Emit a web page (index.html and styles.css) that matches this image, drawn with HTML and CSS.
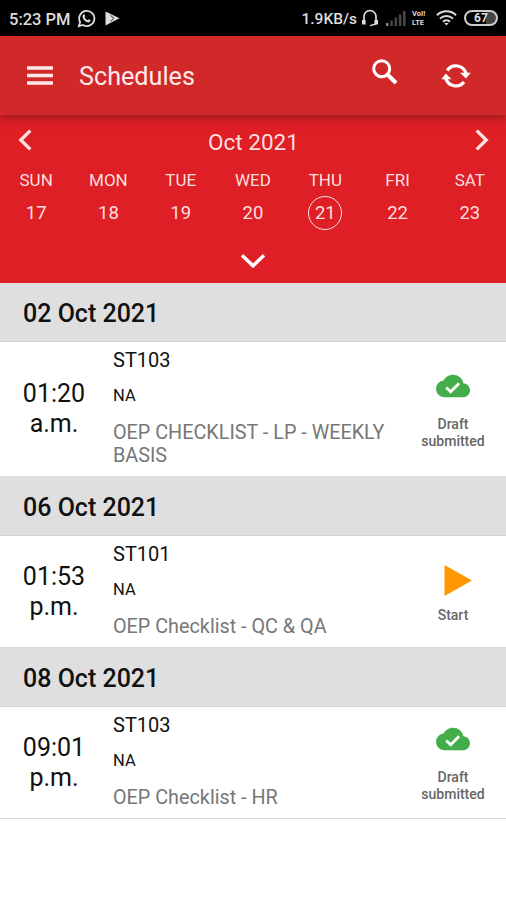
FILE: index.html
```
<!DOCTYPE html>
<html lang="en">
<head>
  <meta charset="UTF-8">
  <title>Schedules</title>
  <link rel="stylesheet" href="styles.css">
</head>
<body>

  <div class="status-bar">
    <div class="status-left">
      <span class="clock">5:23 PM</span>
      <svg class="whatsapp" width="19" height="19" viewBox="0 0 20 20">
        <path d="M2 18 L3.3 13.8 A8 8 0 1 1 6.2 16.8 Z" fill="none" stroke="#ddd" stroke-width="1.9"/>
        <path d="M6.3 6.2 C7 5.2 7.9 5.2 8.3 6.2 L8.8 7.5 L8 8.7 C8.8 10.2 9.8 11.1 11.3 11.8 L12.4 10.8 L14.2 11.7 C14.6 12.9 13.4 14.2 12 14.1 C9 13.8 5.8 10.5 5.8 7.8 Z" fill="#ddd"/>
      </svg>
      <svg class="play-store" width="15" height="15" viewBox="0 0 15 15">
        <path d="M0.5 0.5 L14.5 7.3 L0.5 14.5 Z" fill="#ddd"/>
        <path d="M5.5 4.5 L9 7.3 L5.5 10.5" fill="none" stroke="#333" stroke-width="1"/>
      </svg>
    </div>
    <div class="status-right">
      <span class="speed">1.9KB/s</span>
      <svg class="headset" width="18" height="18" viewBox="0 0 18 18">
        <path d="M3 13 V7.5 A6 6 0 0 1 15 7.5 V13" fill="none" stroke="#ddd" stroke-width="1.7"/>
        <path d="M1 11 H4.6 V15.5 H1 Z M13.4 11 H17 V15.5 H13.4 Z" fill="#ddd"/>
        <path d="M15 15 L9 16.6" stroke="#ddd" stroke-width="1.4"/>
      </svg>
      <svg class="signal" width="20" height="15" viewBox="0 0 20 15">
        <path d="M0 12 H2.5 V15 H0 Z" fill="#888"/>
        <path d="M4.3 9.5 H6.8 V15 H4.3 Z M8.6 6.5 H11.1 V15 H8.6 Z M12.9 3.5 H15.4 V15 H12.9 Z M17 0 H19.5 V15 H17 Z" fill="#484848"/>
      </svg>
      <span class="volte"><span>VoI!</span><span>LTE</span></span>
      <svg class="wifi" width="21" height="16" viewBox="0 0 21 16">
        <path d="M1 5.2 A13.5 13.5 0 0 1 20 5.2 M4 8.6 A9.2 9.2 0 0 1 17 8.6 M7 11.8 A5 5 0 0 1 14 11.8" fill="none" stroke="#ddd" stroke-width="2"/>
        <path d="M8.3 13 H12.7 L10.5 15.6 Z" fill="#ddd"/>
      </svg>
      <span class="battery">67</span>
    </div>
  </div>

  <div class="toolbar">
    <svg class="menu-icon" width="26" height="19" viewBox="0 0 26 19">
      <path d="M0 2 H26 M0 9.5 H26 M0 17 H26" stroke="#fbe9e9" stroke-width="3.4"/>
    </svg>
    <h1>Schedules</h1>
    <svg class="search-icon" width="26" height="26" viewBox="0 0 26 26">
      <circle cx="9.7" cy="9.7" r="8" fill="none" stroke="#fff" stroke-width="3"/>
      <path d="M15.5 15.5 L24 24" stroke="#fff" stroke-width="4"/>
    </svg>
    <svg class="sync-icon" width="30" height="26" viewBox="0 0 30 26">
      <path d="M6.2 7.5 A10.5 10.5 0 0 1 25 10.5 M23 19 A10.5 10.5 0 0 1 4.8 15.5" fill="none" stroke="#fff" stroke-width="3.2"/>
      <path d="M19 9.8 L29.7 9.8 L25 15.6 Z M0.3 16.2 L4.8 10.4 L10.5 16.2 Z" fill="#fff"/>
    </svg>
  </div>

  <div class="calendar">
    <div class="month-row">
      <svg width="14" height="22" viewBox="0 0 14 22">
        <path d="M12.3 1.6 L2.8 11 L12.3 20.4" fill="none" stroke="#fde0e0" stroke-width="3.4"/>
      </svg>
      <span class="month">Oct 2021</span>
      <svg width="14" height="22" viewBox="0 0 14 22">
        <path d="M1.7 1.6 L11.2 11 L1.7 20.4" fill="none" stroke="#fde0e0" stroke-width="3.4"/>
      </svg>
    </div>
    <div class="week">
      <div class="day"><span class="name">SUN</span><span class="num">17</span></div>
      <div class="day"><span class="name">MON</span><span class="num">18</span></div>
      <div class="day"><span class="name">TUE</span><span class="num">19</span></div>
      <div class="day"><span class="name">WED</span><span class="num">20</span></div>
      <div class="day"><span class="name">THU</span><span class="num selected">21</span></div>
      <div class="day"><span class="name">FRI</span><span class="num">22</span></div>
      <div class="day"><span class="name">SAT</span><span class="num">23</span></div>
    </div>
    <svg class="expand" width="26" height="16" viewBox="0 0 26 16">
      <path d="M2 2.3 L13 12.8 L24 2.3" fill="none" stroke="#fff" stroke-width="3.4"/>
    </svg>
  </div>

  <h2>02 Oct 2021</h2>
  <div class="item tall">
    <div class="time">01:20<br>a.m.</div>
    <div class="info">
      <div class="store">ST103</div>
      <div class="na">NA</div>
      <div class="desc">OEP CHECKLIST - LP - WEEKLY BASIS</div>
    </div>
    <div class="state">
      <svg class="cloud" width="34" height="34" viewBox="0 0 24 24">
        <path d="M19.35 10.04 A7.49 7.49 0 0 0 12 4 C9.11 4 6.6 5.64 5.35 8.04 A5.994 5.994 0 0 0 0 14 c0 3.31 2.69 6 6 6 h13 c2.76 0 5-2.24 5-5 c0-2.64-2.05-4.78-4.65-4.96 z" fill="#43ad4a"/>
        <path d="M7.2 13 L10.4 16.1 L16.3 10.1" fill="none" stroke="#fff" stroke-width="2"/>
      </svg>
      <div class="label">Draft<br>submitted</div>
    </div>
  </div>

  <h2>06 Oct 2021</h2>
  <div class="item">
    <div class="time">01:53<br>p.m.</div>
    <div class="info">
      <div class="store">ST101</div>
      <div class="na">NA</div>
      <div class="desc">OEP Checklist - QC &amp; QA</div>
    </div>
    <div class="state">
      <svg class="start" width="38" height="41" viewBox="0 0 38 41">
        <path d="M10.5 5 L38 20.5 L10.5 36 Z" fill="#ff9800"/>
      </svg>
      <div class="label">Start</div>
    </div>
  </div>

  <h2>08 Oct 2021</h2>
  <div class="item">
    <div class="time">09:01<br>p.m.</div>
    <div class="info">
      <div class="store">ST103</div>
      <div class="na">NA</div>
      <div class="desc">OEP Checklist - HR</div>
    </div>
    <div class="state">
      <svg class="cloud" width="34" height="34" viewBox="0 0 24 24">
        <path d="M19.35 10.04 A7.49 7.49 0 0 0 12 4 C9.11 4 6.6 5.64 5.35 8.04 A5.994 5.994 0 0 0 0 14 c0 3.31 2.69 6 6 6 h13 c2.76 0 5-2.24 5-5 c0-2.64-2.05-4.78-4.65-4.96 z" fill="#43ad4a"/>
        <path d="M7.2 13 L10.4 16.1 L16.3 10.1" fill="none" stroke="#fff" stroke-width="2"/>
      </svg>
      <div class="label">Draft<br>submitted</div>
    </div>
  </div>

</body>
</html>
```
FILE: styles.css
```
* {
  box-sizing: border-box;
}
body {
  margin: 0;
  font-family: Roboto, sans-serif;
  background: #fff;
  color: #111;
}
svg {
  display: block;
  flex: none;
}

/* status bar */
.status-bar {
  height: 36px;
  background: #000;
  color: #ddd;
  display: flex;
  justify-content: space-between;
  align-items: center;
  padding: 0 8px 0 9px;
}
.status-left, .status-right {
  display: flex;
  align-items: center;
}
.clock {
  font-size: 16.5px;
  font-weight: 500;
  width: 60px;
  padding-top: 2px;
  white-space: nowrap;
}
.whatsapp {
  margin-left: 8px;
}
.play-store {
  margin-left: 9px;
}
.speed {
  padding-top: 2px;
  font-size: 15.5px;
  font-weight: 500;
}
.headset {
  margin-left: 4px;
}
.signal {
  margin-left: 7px;
}
.volte {
  display: flex;
  flex-direction: column;
  width: 17px;
  margin-left: 6px;
  font-size: 7.5px;
  line-height: 9px;
  font-weight: 700;
}
.wifi {
  margin-left: 7px;
}
.battery {
  width: 34px;
  height: 16px;
  margin-left: 7px;
  border: 2px solid #ccc;
  border-radius: 8px;
  background: linear-gradient(to right, #000 67%, #444 67%);
  font-size: 12px;
  line-height: 13px;
  font-weight: 700;
  text-align: center;
}

/* toolbar */
.toolbar {
  position: relative;
  height: 79px;
  background: #d12929;
  box-shadow: 0 2px 9px rgba(90, 20, 20, 0.6);
  display: flex;
  align-items: center;
  padding: 0 35px 0 27px;
}
h1 {
  margin: 0 auto 0 26px;
  padding-top: 2px;
  font-size: 25.2px;
  font-weight: 400;
  color: #fdeaea;
}
.search-icon {
  margin: -7px 43px 0 0;
}

/* week calendar */
.calendar {
  height: 168px;
  background: #de1f26;
  color: #fddede;
}
.month-row {
  display: flex;
  justify-content: space-between;
  align-items: center;
  height: 50px;
  padding: 0 17px 0 18px;
}
.month {
  font-size: 22.5px;
  padding-top: 3px;
}
.week {
  display: grid;
  grid-template-columns: repeat(7, 1fr);
}
.day {
  display: flex;
  flex-direction: column;
  align-items: center;
}
.name {
  font-size: 17px;
  line-height: 30px;
}
.num {
  width: 34px;
  height: 34px;
  margin-top: 1px;
  font-size: 18.5px;
  line-height: 32px;
  text-align: center;
  border: 1.5px solid transparent;
  border-radius: 50%;
}
.selected {
  border-color: #fddede;
}
.expand {
  margin: 23px auto 0;
}

/* schedule list */
h2 {
  margin: 0;
  height: 59px;
  padding: 2px 23px 0;
  background: #dfdfdf;
  border-bottom: 1px solid #d3d3d3;
  font-size: 25px;
  line-height: 58px;
  font-weight: 500;
}
.item {
  display: flex;
  height: 112px;
  border-bottom: 1px solid #d9d9d9;
}
.tall {
  height: 135px;
}
.time {
  width: 108px;
  align-self: center;
  text-align: center;
  font-size: 25px;
  line-height: 30px;
}
.info {
  width: 292px;
  padding: 6px 0 0 5px;
}
.store {
  font-size: 20px;
  line-height: 24px;
}
.na {
  margin: 12px 0 13px;
  font-size: 16.5px;
  line-height: 24px;
}
.desc {
  font-size: 19.8px;
  line-height: 23px;
  color: #777;
}
.state {
  width: 106px;
  display: flex;
  flex-direction: column;
  align-items: center;
  justify-content: center;
}
.label {
  font-size: 14px;
  line-height: 17px;
  font-weight: 500;
  color: #666;
  text-align: center;
}
.cloud {
  margin-bottom: 13px;
}
.start {
  margin-bottom: 6px;
}
```
